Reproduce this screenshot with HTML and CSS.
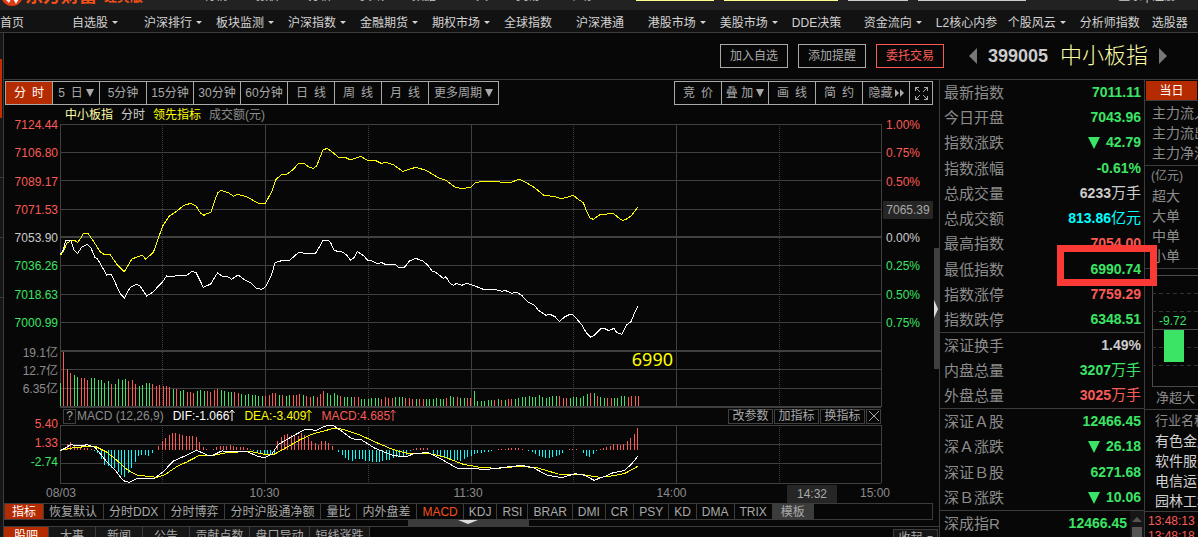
FILE: index.html
```html
<!DOCTYPE html>
<html lang="zh-CN">
<head>
<meta charset="utf-8">
<title>中小板指 399005</title>
<link rel="stylesheet" href="styles.css">
</head>
<body>
<header class="topbar">
  <svg class="logo" width="20" height="10" viewBox="0 0 20 10"><circle cx="10" cy="-5" r="11" fill="#e23a12"/><path d="M1-3 7 3 10-3 14 4 18-3z" fill="#f5f5f5"/></svg>
  <b class="brand">东方财富</b><b class="edition">经典版</b>
  <nav class="menu"><a href="#">行情▪</a><a href="#">报价▪</a><a href="#">分析▪</a><a href="#">资讯▪</a><a href="#">数据▪</a><a href="#">工具▪</a><a href="#">交易▪</a><a href="#">帮助▪</a></nav>
  <nav class="promo"><a class="p1" href="#"></a><a class="p2" href="#"></a><a class="p3" href="#"></a><a class="p4" href="#"></a></nav>
  <span class="account">登录 | 注册</span>
</header>
<nav class="nav">
  <a href="#">首页</a><a href="#">自选股<i class="caret"></i></a><a href="#">沪深排行<i class="caret"></i></a><a href="#">板块监测<i class="caret"></i></a><a href="#">沪深指数<i class="caret"></i></a><a href="#">金融期货<i class="caret"></i></a><a href="#">期权市场<i class="caret"></i></a><a href="#">全球指数</a><a href="#">沪深港通</a><a href="#">港股市场<i class="caret"></i></a><a href="#">美股市场<i class="caret"></i></a><a href="#">DDE决策</a><a href="#">资金流向<i class="caret"></i></a><a href="#">L2核心内参</a><a href="#">个股风云<i class="caret"></i></a><a href="#">分析师指数</a><a href="#">选股器</a>
</nav>
<div class="app">
  <aside class="rail"><div class="rail-on"></div><div class="rail-tab"></div><div class="rail-tab"></div><div class="rail-tab"></div></aside>
  <div class="title">
    <div class="actions"><button>加入自选</button><button>添加提醒</button><button class="trade">委托交易</button></div>
    <button class="step" aria-label="上一个"><svg width="8" height="16" viewBox="0 0 8 16"><path d="M8 0v16L0 8z"/></svg></button>
    <b class="code">399005</b><h1>中小板指</h1>
    <button class="step" aria-label="下一个"><svg width="8" height="16" viewBox="0 0 8 16"><path d="M0 0v16l8-8z"/></svg></button>
  </div>
  <main class="main">
    <div class="toolbar">
      <div class="group periods"><button class="on">分&ensp;时</button><button>5&ensp;日<i class="down"></i></button><button>5分钟</button><button>15分钟</button><button>30分钟</button><button>60分钟</button><button>日&ensp;线</button><button>周&ensp;线</button><button>月&ensp;线</button><button class="more">更多周期<i class="down"></i></button></div>
      <div class="group tools"><button>竞&ensp;价</button><button>叠 加<i class="down"></i></button><button>画&ensp;线</button><button>简&ensp;约</button><button>隐藏<svg width="9" height="8" viewBox="0 0 9 8"><path d="M0 0v8l4-4zM5 0v8l4-4z" fill="#a9a9a9"/></svg></button><button class="full" aria-label="全屏"><svg width="13" height="13" viewBox="0 0 13 13" fill="none" stroke="#a9a9a9" shape-rendering="crispEdges"><path d="M.5 4V.5H4M9 .5h3.500V4M.5 9v3.500H4M9 12.500h3.500V9"/><path d="M1 1l4 4M12 1 8 5M1 12l4-4M12 12 8 8"/></svg></button></div>
    </div>
    <div class="legend"><span class="pale">中小板指</span><span class="lt">分时</span><span class="yellow">领先指标</span><span>成交额(元)</span></div>
    <div class="chart">
      <div class="axis left prices"><span class="up">7124.44</span><span class="up">7106.80</span><span class="up">7089.17</span><span class="up">7071.53</span><span class="lt">7053.90</span><span class="dn">7036.26</span><span class="dn">7018.63</span><span class="dn">7000.99</span></div>
      <div class="axis left volumes"><span>19.1亿</span><span>12.7亿</span><span>6.35亿</span></div>
      <div class="axis left macds"><span class="up">5.40</span><span class="up">1.33</span><span class="dn">-2.74</span></div>
      <svg class="plot" id="plot" viewBox="180 42 2466 1080" preserveAspectRatio="none" role="img" aria-label="分时走势图"></svg>
      <div class="macdbar"><button class="help">?</button><span>MACD (12,26,9)</span><span class="white">DIF:-1.066<svg class="rise" viewBox="0 0 6 12"><path d="M3 12V1M.5 4 3 1l2.500 3"/></svg></span><span class="yellow">DEA:-3.409<svg class="rise" viewBox="0 0 6 12"><path d="M3 12V1M.5 4 3 1l2.500 3"/></svg></span><span class="up">MACD:4.685<svg class="rise" viewBox="0 0 6 12"><path d="M3 12V1M.5 4 3 1l2.500 3"/></svg></span>
        <div class="edit"><button>改参数</button><button>加指标</button><button>换指标</button><button class="close" aria-label="关闭"><svg width="10" height="10" viewBox="0 0 10 10" stroke="#a9a9a9"><path d="M0 0l10 10M10 0 0 10"/></svg></button></div>
      </div>
      <div class="axis right prices"><span class="up">1.00%</span><span class="up">0.75%</span><span class="up">0.50%</span><span class="hide">0.25%</span><span class="lt">0.00%</span><span class="dn">0.25%</span><span class="dn">0.50%</span><span class="dn">0.75%</span></div>
      <span class="cursor-price">7065.39</span>
      <span class="note">6990</span>
    </div>
    <div class="times"><span>08/03</span><span>10:30</span><span>11:30</span><span>14:00</span><span>15:00</span><b class="cursor-time">14:32</b></div>
    <div class="indicators"><button class="on">指标</button><button class="zh">恢复默认</button><button class="zh">分时DDX</button><button class="zh">分时博弈</button><button class="zh">分时沪股通净额</button><button class="zh">量比</button><button class="zh">内外盘差</button><button class="cur">MACD</button><button>KDJ</button><button>RSI</button><button>BRAR</button><button>DMI</button><button>CR</button><button>PSY</button><button>KD</button><button>DMA</button><button>TRIX</button><button class="tpl">模板</button></div>
    <div class="splitter"><div class="grip"><svg width="20" height="4" viewBox="0 0 20 4"><path d="M0 0h20L10 4z" fill="#ddd"/></svg></div></div>
    <div class="tabs"><button class="on">股吧</button><button>大事</button><button>新闻</button><button>公告</button><button class="wide">贡献点数</button><button class="wide">盘口异动</button><button class="wide">短线涨跌</button><button class="fold">收起<i class="caret"></i></button></div>
    <div class="scroll"><svg width="4" height="18" viewBox="0 0 4 18"><path d="M0 0l4 9-4 9z" fill="#ddd"/></svg></div>
  </main>
  <section class="stats">
    <dl class="ten"><dt>最新指数</dt><dd class="dn">7011.11</dd><dt>今日开盘</dt><dd class="dn">7043.96</dd><dt>指数涨跌</dt><dd class="dn"><i class="fall"></i>42.79</dd><dt>指数涨幅</dt><dd class="dn">-0.61%</dd><dt>总成交量</dt><dd class="lt">6233<em>万手</em></dd><dt>总成交额</dt><dd class="cyan">813.86<em>亿元</em></dd><dt>最高指数</dt><dd class="up">7054.00</dd><dt>最低指数</dt><dd class="dn">6990.74</dd><dt>指数涨停</dt><dd class="up">7759.29</dd><dt>指数跌停</dt><dd class="dn">6348.51</dd></dl>
    <dl><dt>深证换手</dt><dd class="lt">1.49%</dd><dt>内盘总量</dt><dd class="dn">3207<em>万手</em></dd><dt>外盘总量</dt><dd class="up">3025<em>万手</em></dd></dl>
    <dl class="four"><dt>深证Ａ股</dt><dd class="dn">12466.45</dd><dt>深Ａ涨跌</dt><dd class="dn"><i class="fall"></i>26.18</dd><dt>深证Ｂ股</dt><dd class="dn">6271.68</dd><dt>深Ｂ涨跌</dt><dd class="dn"><i class="fall"></i>10.06</dd></dl>
    <div class="last"><dl><dt>深成指R</dt><dd class="dn">12466.45</dd></dl><div class="bar"><i></i><b></b></div></div>
    <div class="mark"></div>
  </section>
  <aside class="flow">
    <button class="day">当日</button>
    <div class="lines"><p>主力流入</p><p>主力流出</p><p>主力净流入</p></div>
    <div class="sizes"><p class="unit">(亿元)</p><p>超大</p><p>大单</p><p>中单</p><p>小单</p></div>
    <svg class="mini" width="60" height="112" viewBox="0 0 60 112" shape-rendering="crispEdges"><path d="M60 .5H.5v111H60M0 54.500h60" fill="none" stroke="#4a4a4a"/><path d="M0 18.500h60M0 36.500h60M0 72.500h60M0 90.500h60" stroke="#333" stroke-dasharray="4 3"/><path fill="#3be465" d="M12 55h20v32H12z"/><text x="7" y="50">-9.72</text></svg>
    <p class="net">净超大</p>
    <div class="sectors"><p class="head">行业名称</p><p>有色金属</p><p>软件服务</p><p>电信运营</p><p>园林工程</p></div>
    <div class="ticks"><p>13:48:13</p><p>13:48:18</p></div>
  </aside>
</div>
<script src="chart.js"></script>
</body>
</html>
```
FILE: styles.css
```css
* { box-sizing: border-box; }
body { margin: 0; height: 100vh; overflow: hidden; display: flex; flex-direction: column; background: #070707; color: #8c8c8c; font: 12px/14px "Liberation Sans", "Noto Sans CJK SC", sans-serif; }
p, h1, dl, dd { margin: 0; }
a { color: inherit; text-decoration: none; }
button { font: inherit; color: inherit; background: none; border: 0; padding: 0; white-space: nowrap; display: flex; align-items: center; justify-content: center; }
i, em { font-style: normal; }
svg { flex: none; }

.up { color: #fa5b56; }
.dn { color: #3be465; }
.lt { color: #ccc; }
.white { color: #fff; }
.yellow { color: #ff0; }
.pale { color: #ffffa8; }
.cyan { color: #0ff; }
.hide { visibility: hidden; }

.topbar { flex: none; height: 10px; overflow: hidden; background: #222; display: flex; align-items: flex-start; color: #c8c8c8; white-space: nowrap; }
.logo { margin-left: 2px; }
.brand { margin: -14px 0 0 3px; color: #f4511a; font-size: 18px; line-height: 20px; }
.edition { margin: -10px 0 0 7px; color: #f4511a; font-size: 13px; }
.menu { display: flex; margin: -11px 0 0 61px; }
.menu a { width: 52px; }
.promo { display: flex; gap: 10px; margin-left: 16px; }
.promo a { height: 1px; background: #ffff8c; }
.promo .p1 { width: 78px; }
.promo .p2 { width: 114px; }
.promo .p3 { width: 60px; background: #ccc; }
.promo .p4 { width: 108px; background: #ccc; }
.account { margin: -11px 22px 0 auto; }

.nav { flex: none; height: 23px; padding: 3px 0 0 0; display: flex; background: #121212; border-bottom: 1px solid #3c3c3c; color: #d2d2d2; white-space: nowrap; overflow: hidden; }
.nav a { flex: 0 0 6.01%; display: flex; align-items: center; gap: 4px; }
.caret { border: 3px solid transparent; border-top-color: currentColor; border-bottom: 0; }
.down { border: 4px solid transparent; border-top: 8px solid #a9a9a9; border-bottom: 0; margin-left: 3px; }

.app { flex: 1; display: grid; grid-template-columns: 4px minmax(0, 1fr) 206px 53px; grid-template-rows: 47px 1fr; }
.rail { grid-row: 1 / 3; background: #161616; border-right: 1px solid #3c3c3c; padding-top: 26px; }
.rail-on { width: 2px; height: 59px; background: #c22e00; }
.rail-tab { height: 60px; border-bottom: 1px solid #3c3c3c; }
.title { grid-column: 2 / 5; display: flex; align-items: center; justify-content: flex-end; padding-right: 31px; border-bottom: 1px solid #3c3c3c; }
.actions { display: flex; gap: 10px; margin-right: 25px; color: #a9a9a9; }
.actions button { width: 68px; height: 24px; border: 1px solid #a9a9a9; }
.actions .trade { color: #fa5b56; border-color: #fa5b56; }
.step { fill: #777; }
.code { margin: 0 12px 0 11px; font-size: 18px; color: #ccc; }
h1 { margin-right: 11px; font-size: 22px; line-height: 24px; font-weight: 300; color: #ffffa8; }

.main { position: relative; min-width: 0; display: flex; flex-direction: column; }
.toolbar { flex: none; padding: 1px 6px 0 1px; display: flex; justify-content: space-between; color: #a9a9a9; }
.group { display: flex; height: 24px; border: 1px solid #a9a9a9; }
.group button { width: 47px; border-right: 1px solid #a9a9a9; }
.group button:last-child { border-right: 0; }
.group .on { background: #b52b00; color: #fff; }
.group .more { width: 69px; }
.group .full { width: 22px; }
.group svg { margin-left: 2px; }
.group .full svg { margin: 0; }
.legend { flex: none; height: 19px; padding-left: 61px; display: flex; align-items: center; gap: 8px; }

.chart { flex: none; position: relative; display: grid; grid-template-columns: 56px minmax(0, 1fr) 57px; grid-template-rows: 283px 17px 60px; }
.axis { display: flex; flex-direction: column; justify-content: space-between; }
.left { grid-column: 1; text-align: right; padding-right: 2px; }
.right { grid-column: 3; padding-left: 4px; }
.prices { grid-row: 1; height: 212px; margin-top: -6px; }
.volumes { grid-row: 1; align-self: end; height: 50px; margin-bottom: 11px; }
.macds { grid-row: 3; height: 52px; margin-top: -7px; }
.plot { grid-column: 2; grid-row: 1 / 4; width: 100%; height: 100%; }
.plot path { fill: none; vector-effect: non-scaling-stroke; shape-rendering: crispEdges; }
.grid { stroke: #404040; }
.thick { stroke: #404040; stroke-width: 2; }
.dots { stroke: #404040; stroke-dasharray: 1 1; }
.s-up { stroke: #fa5b56; }
.s-dn { stroke: #3be465; }
.s-cyan { stroke: #0ff; }
.s-white { stroke: #fff; }
.s-yellow { stroke: #ff0; }
.macdbar { grid-column: 2; grid-row: 2; z-index: 1; background: #070707; margin: 1px 1px 0; padding-left: 2px; display: flex; align-items: center; gap: 9px; }
.macdbar button { height: 15px; border: 1px solid #404040; color: #a9a9a9; }
.macdbar .help { width: 13px; margin-right: -8px; }
.rise { width: 6px; height: 12px; vertical-align: -1px; fill: none; stroke: currentColor; }
.edit { margin-left: auto; display: flex; gap: 1px; }
.edit button { width: 45px; }
.edit .close { width: 15px; }
.cursor-price { position: absolute; right: 6px; top: 77px; width: 50px; line-height: 18px; text-align: center; background: #262626; color: #a9a9a9; }
.note { position: absolute; right: 266px; top: 224px; font: 18px/22px "Noto Sans", sans-serif; color: #ff0; }

.times { flex: none; position: relative; height: 19px; line-height: 19px; margin: 0 31px 0 24px; display: flex; justify-content: space-between; }
.times span { width: 66px; text-align: center; }
.cursor-time { position: absolute; right: 71px; top: 1px; width: 50px; line-height: 18px; text-align: center; font-weight: 400; background: #262626; color: #a9a9a9; }
.indicators { flex: none; height: 17px; margin-right: 6px; border: 1px solid #3c3c3c; display: flex; color: #a9a9a9; }
.indicators button { padding: 0 5px; border-right: 1px solid #3c3c3c; }
.indicators .zh { padding: 0 6px 0 5px; }
.indicators .on { padding: 0 7px; background: #b52b00; color: #fff; }
.indicators .cur { color: #f4511a; }
.indicators .tpl { padding: 0 8px; background: #3c3c3c; }
.splitter { flex: none; height: 7px; border-bottom: 1px solid #3c3c3c; }
.grip { width: 121px; height: 6px; margin-left: 43.2%; padding-left: 50px; background: #3c3c3c; }
.grip svg { display: block; }
.tabs { flex: none; display: flex; height: 18px; color: #a9a9a9; }
.tabs button { width: 47px; background: #161616; border-right: 1px solid #3c3c3c; }
.tabs .wide { width: 60px; }
.tabs .on { width: 45px; background: #b52b00; color: #fff; }
.tabs .fold { width: 45px; margin: 2px 1px 0 auto; border: 1px solid #3c3c3c; border-bottom: 0; gap: 4px; }
.scroll { position: absolute; right: 0; top: 168px; width: 5px; height: 121px; padding-top: 52px; background: #404040; }

.stats { position: relative; border: solid #3c3c3c; border-width: 0 1px; }
.stats dl { display: grid; grid-template-columns: auto 1fr; grid-auto-rows: 25px; align-content: space-between; height: 76px; padding: 0 3px 0 4px; line-height: 25px; font-size: 15px; border-bottom: 1px solid #3c3c3c; }
.stats .ten { height: 253px; }
.stats .four { height: 102px; }
.stats dd { font-size: 14px; font-weight: 700; text-align: right; }
.stats em { font-size: 15px; font-weight: 400; line-height: 1; }
.fall { display: inline-block; border: 6px solid transparent; border-top: 12px solid; border-bottom: 0; margin-right: 6px; vertical-align: -2px; }
.last { display: flex; }
.stats .last dl { flex: 1; border: 0; height: 27px; }
.last .bar { width: 14px; background: #161616; }
.bar i { display: block; border: 5px solid transparent; border-bottom-color: #555; border-top: 0; margin: 6px 2px 5px; }
.bar b { display: block; height: 12px; margin: 0 2px; background: #555; }
.mark { position: absolute; right: -13px; top: 165px; width: 100px; height: 41px; border: 7px solid #fc3a35; z-index: 2; }

.flow { overflow: hidden; white-space: nowrap; font-size: 14px; padding-top: 1px; }
.day { width: 51px; height: 19px; margin-left: 1px; background: #b52b00; color: #fff; font-size: 12px; }
.lines { padding: 2px 0 2px 7px; line-height: 20px; border-top: 1px solid #3c3c3c; }
.sizes { padding: 0 0 2px 7px; line-height: 20px; border: solid #3c3c3c; border-width: 1px 0; }
.sizes .unit { font-size: 12px; margin-left: -1px; }
.mini { display: block; margin: 6px 0 0 7px; }
.mini text { fill: #3be465; font-size: 12px; }
.net { padding-left: 11px; line-height: 22px; font-size: 13px; border-bottom: 1px solid #3c3c3c; }
.sectors { padding-left: 10px; line-height: 20px; color: #d2d2d2; border-bottom: 1px solid #3c3c3c; }
.sectors .head { color: #8c8c8c; font-size: 13px; line-height: 21px; }
.ticks { padding: 2px 0 0 3px; font-size: 12px; line-height: 15px; color: #fa5b56; }
```
FILE: chart.js
```js
// Plot units are thirds of a pixel at the base size; one minute is 10.26 units.
const svg = document.getElementById('plot');
const add = (cls, d) => {
  const p = document.createElementNS('http://www.w3.org/2000/svg', 'path');
  p.setAttribute('class', cls);
  p.setAttribute('d', d);
  svg.appendChild(p);
};
const X = i => 181.5 + 10.26 * i;
const rows = (cls, ys) => add(cls, ys.map(y => `M181 ${y}H2643`).join(''));
rows('grid', [43.5, 127.5, 211.5, 298.5, 466.5, 553.5, 637.5, 778.5, 835.5, 946.5, 1003.5, 1060.5, 1120.5]);
rows('thick', [381, 723, 891]);
add('grid', [181.5, 796.5, 1414.5, 2029.5, 2644.5].map(x => `M${x} 43V891M${x} 946V1120`).join(''));
add('dots', [487.5, 1105.5, 1720.5, 2338.5].map(x => `M${x} 43V891M${x} 946V1120`).join(''));

const volume = '23g 54r 37r 33r 31g 29g 28r 28r 26r 28g 28g 26g 26g 23g 25g 22r 22g 27g 26g 27g 25r 26r 22r 20g 21g 23g 23g 22r 20r 21r 20r 20r 19r 17g 17r 15g 16g 14r 14r 13r 15g 16g 15g 15r 14r 16r 17r 16g 15g 14g 14g 14r 13r 12g 11g 12g 11g 11g 10g 10g 10r 11r 13r 13r 11g 11r 10g 11g 11r 11r 12r 11g 10r 9r 10g 9r 12r 15r 13g 11g 13g 11g 10r 9g 9g 9g 9r 9r 7g 7g 7g 8g 8g 8g 7r 9r 8r 8r 9g 9g 9g 8r 8r 7r 7g 7r 7r 7g 7g 7g 8g 7g 7g 8r 10g 9g 9r 8g 8g 8r 8r 15g 5g 5g 5g 6g 6g 6r 7g 6r 6g 7r 7r 7g 8g 9g 9g 10g 9g 9g 11g 9g 8g 9g 10g 10g 10r 8r 8r 8g 9g 9g 8g 10g 12g 13r 13g 10r 9g 8g 8r 8r 8g 8g 10g 10g 9r 10r 10r 10r 10r'.split(' ');
volume.slice(0, 170).forEach((v, i) => add(v.endsWith('g') ? 's-dn' : 's-up', `M${X(i)} 888v${-3 * parseInt(v)}`));

const macd = [0,1,6,8,5,3,2,2,2,1,-1,-3,-9,-15,-16,-18,-18,-22,-25,-27,-23,-18,-12,-6,-5,-5,-6,-3,0,4,9,12,15,17,17,16,15,14,14,14,13,8,3,1,0,1,3,4,4,4,5,4,3,3,3,2,1,-1,-3,-4,-5,-5,-4,-5,9,13,15,16,15,15,14,17,15,13,9,7,5,9,9,7,4,0,-2,-5,-8,-10,-11,-9,-9,-9,-11,-11,-12,-12,-12,-11,-10,-10,-8,-7,-6,-6,-5,-1,1,2,2,2,2,0,-4,-5,-7,-8,-8,-9,-10,-10,-11,-9,-7,-6,-4,-3,-3,-2,-2,-1,0,1,1,1,2,2,2,2,1,0,-1,-2,-4,-6,-7,-8,-8,-7,-6,-5,-3,0,1,1,1,0,-3,-6,-7,-4,-1,1,2,3,4,6,6,5,6,9,12,16,22];
macd.forEach((v, i) => v && add(v > 0 ? 's-up' : 's-cyan', `M${X(i * 168.7 / (macd.length - 1))} 1021v${-3 * v}`));

// Each series comes as a morning half and an afternoon half, the second one shifted by 960 units.
const line = (cls, dy, a, b) => {
  const pts = (s, dx) => s.split(' ').map(p => p.split(',').map(Number)).map(([x, y]) => `${x + dx} ${y + dy}`);
  add(cls, 'M' + [...pts(a, 0), ...pts(b, 960)].join('L'));
};
line('s-yellow', 0,
  '181,436 190,425 200,400 215,390 225,392 233,397 242,385 250,370 264,370 280,393 300,425 312,433 330,433 350,462 373,485 395,448 410,441 428,436 437,448 460,427 475,385 488,348 508,318 530,304 550,287 572,280 588,288 602,310 612,316 620,311 632,308 645,270 653,249 662,241 685,248 701,259 712,253 740,260 775,280 796,280 815,245 828,208 845,194 858,195 880,178 895,161 912,160 925,170 940,175 950,168',
  '8,121 21,115 33,123 55,141 75,142 92,150 122,139 143,151 165,151 184,160 197,157 220,164 248,184 287,172 318,181 355,203 378,211 405,231 425,236 452,232 465,219 485,214 503,216 530,213 545,217 573,217 597,208 612,214 645,234 670,255 705,260 722,266 745,261 760,256 775,268 790,278 798,300 810,324 820,328 840,314 880,310 895,323 908,332 920,327 935,316 953,292');
line('s-white', 0,
  '181,432 190,420 197,390 212,390 222,420 233,430 245,412 262,403 272,412 285,443 292,446 320,495 334,493 360,550 373,564 390,533 410,522 420,528 440,558 458,547 488,515 500,498 520,500 530,495 558,498 575,485 588,487 610,532 632,522 653,488 665,498 682,499 695,508 714,495 732,508 750,517 770,535 785,538 796,531 815,493 825,458 845,452 870,450 895,428 945,432',
  '0,408 8,391 25,391 32,398 42,420 52,424 65,425 80,435 92,451 102,443 112,425 132,438 143,451 155,452 175,462 184,457 195,463 226,463 236,473 248,474 255,470 268,453 287,445 308,453 323,465 336,483 347,487 370,505 378,500 388,518 400,526 410,520 425,526 440,520 465,528 490,538 525,538 545,544 555,541 575,550 590,547 605,556 625,577 643,585 655,601 678,616 690,613 705,620 718,634 735,620 750,613 760,615 785,644 798,667 812,682 825,674 843,655 853,655 866,662 882,655 890,667 905,673 920,645 933,635 943,610 953,589');
line('s-yellow', 690,
  '181,331 225,322 285,319 320,336 355,365 380,388 410,405 470,412 495,404 530,380 560,366 595,348 640,346 680,338 750,334 795,343 822,343 860,322 900,299 935,283',
  '0,276 45,264 70,268 120,285 170,308 220,329 265,341 325,340 370,350 430,373 480,382 530,385 600,379 650,383 715,402 780,403 840,412 880,407 915,400 953,379');
line('s-white', 690,
  '181,331 195,325 212,314 240,318 262,314 285,322 300,340 320,365 345,390 370,422 387,427 410,416 460,417 490,395 520,363 550,350 590,331 622,345 640,345 665,333 740,334 775,350 795,353 815,343 835,313 870,293 915,268 950,271',
  '0,265 22,256 40,257 60,270 95,296 125,300 165,325 215,345 255,351 285,340 325,338 365,358 410,384 450,386 500,388 545,383 605,376 640,383 680,405 725,413 765,401 795,406 822,421 860,407 880,398 912,392 935,372 953,349');
```
